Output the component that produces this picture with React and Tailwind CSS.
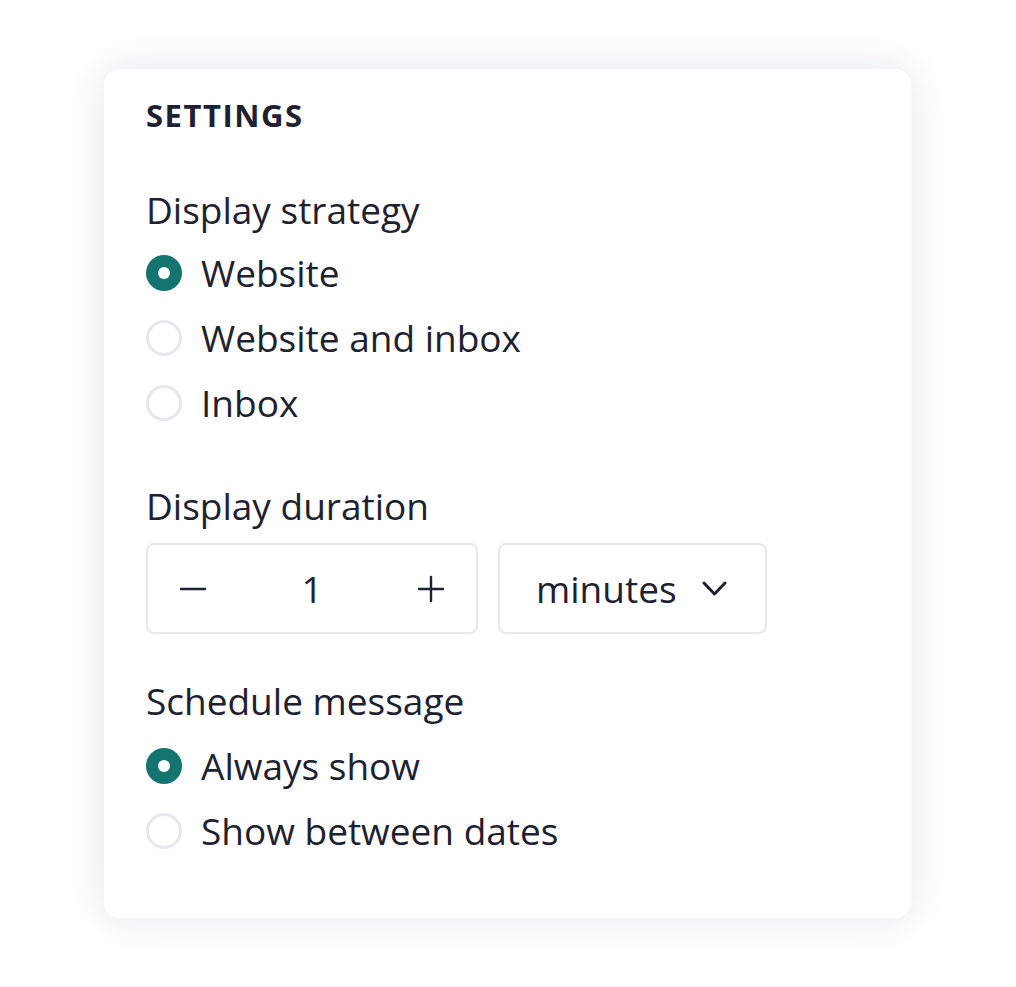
function Radio({ label, checked }) {
  return (
    <label className="flex items-center h-[65px] gap-[19px]">
      {checked ? (
        <span className="w-[36px] h-[36px] rounded-full bg-[#147570] flex items-center justify-center">
          <span className="w-[12px] h-[12px] rounded-full bg-white" />
        </span>
      ) : (
        <span className="w-[36px] h-[36px] rounded-full border-[3px] border-[#e6e8ee] bg-white" />
      )}
      <span>{label}</span>
    </label>
  )
}

export default function App() {
  return (
    <div className="w-[1016px] h-[987px] bg-white pt-[69px] pl-[104px] text-[#1d2130] font-['Open_Sans',sans-serif]">
      <div className="w-[807px] h-[849px] bg-white rounded-[16px] shadow-[0_0_40px_rgba(20,30,60,0.11)] px-[42px] pt-[26px] text-[37px]">
        {/* title */}
        <h2 className="h-[40px] leading-[40px] text-[31px] font-bold tracking-[0.05em]">SETTINGS</h2>

        {/* display strategy */}
        <div className="mt-[53px] h-[44px] leading-[44px]">Display strategy</div>
        <div className="mt-[8px]">
          <Radio label="Website" checked />
          <Radio label="Website and inbox" />
          <Radio label="Inbox" />
        </div>

        {/* duration */}
        <div className="mt-[49px] h-[44px] leading-[44px]">Display duration</div>
        <div className="mt-[15px] flex gap-[20px]">
          <div className="w-[332px] h-[91px] border-2 border-[#e6e8ee] rounded-[8px] flex items-center justify-between px-[31px]">
            <svg width="28" height="28" viewBox="0 0 28 28" fill="none" stroke="currentColor" strokeWidth="2.4" strokeLinecap="round">
              <path d="M2 14h24" />
            </svg>
            <span>1</span>
            <svg width="28" height="28" viewBox="0 0 28 28" fill="none" stroke="currentColor" strokeWidth="2.4" strokeLinecap="round">
              <path d="M2 14h24M14 2v24" />
            </svg>
          </div>
          <div className="w-[269px] h-[91px] border-2 border-[#e6e8ee] rounded-[8px] flex items-center pl-[36px]">
            <span>minutes</span>
            <svg className="ml-[25px]" width="25" height="16" viewBox="0 0 25 16" fill="none" stroke="currentColor" strokeWidth="3" strokeLinecap="round" strokeLinejoin="round">
              <path d="M2 2l10.5 11L23 2" />
            </svg>
          </div>
        </div>

        {/* schedule */}
        <div className="mt-[45px] h-[44px] leading-[44px]">Schedule message</div>
        <div className="mt-[10px]">
          <Radio label="Always show" checked />
          <Radio label="Show between dates" />
        </div>
      </div>
    </div>
  )
}
